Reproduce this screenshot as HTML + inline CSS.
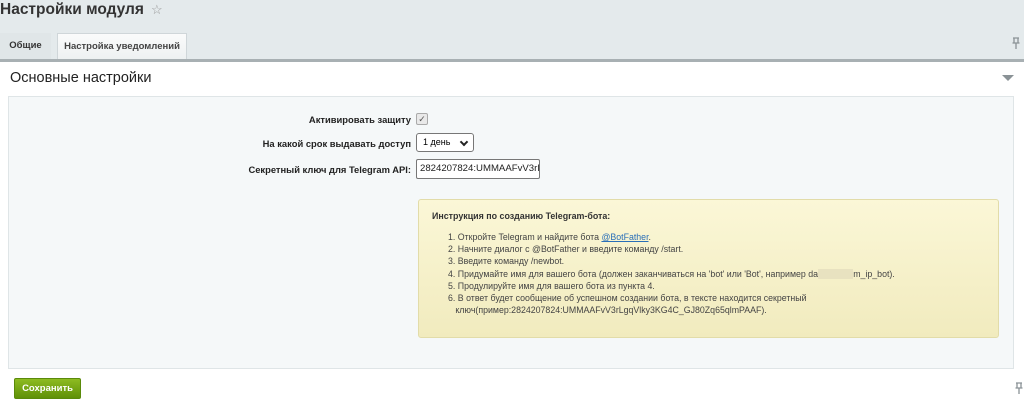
<!DOCTYPE html>
<html><head><meta charset="utf-8"><style>
*{margin:0;padding:0;box-sizing:border-box}
body{width:1024px;height:407px;background:#fff;font-family:"Liberation Sans",Arial,sans-serif;position:relative;overflow:hidden;color:#000}
.top{position:absolute;left:0;top:0;width:1024px;height:59px;background:#e4eaec}
h1{position:absolute;left:0;top:1px;font-size:15.5px;font-weight:bold;color:#333;white-space:nowrap}
.star{position:absolute;left:151px;top:2px;font-size:13px;color:#999}
.tab{position:absolute;top:33px;height:26px;font-size:9.5px;font-weight:bold;line-height:25px;text-align:center;color:#333;white-space:nowrap}
.t1{left:0;width:51px;background:#e0e6e8;}
.t2{left:57px;width:130px;background:linear-gradient(#fafbfb,#eef1f2);border:1px solid #cfd6d9;border-bottom:none;color:#444}
.line{position:absolute;left:0;top:59px;width:1024px;height:3px;background:#a8b0b3}
.sec{position:absolute;left:10px;top:70px;font-size:14.5px;color:#222}
.tri{position:absolute;left:1002px;top:75px;width:0;height:0;border-left:6px solid transparent;border-right:6px solid transparent;border-top:6px solid #8a9296}
.pin{position:absolute}
.box{position:absolute;left:8px;top:96px;width:1006px;height:273px;background:#f5f8f9;border:1px solid #dfe5e7}
.lbl{position:absolute;right:613px;font-size:9.4px;font-weight:bold;color:#222;white-space:nowrap}
.chk{position:absolute;left:416px;top:113px;width:12px;height:12px;border:1px solid #aaa;border-radius:2px;background:#e9e9e9;font-size:9px;line-height:10px;text-align:center;color:#555}
.sel{position:absolute;left:416px;top:133px;width:58px;height:19px;border:1px solid #777;border-radius:3px;background:#fff;font-size:9px;padding-left:6px;line-height:17px}
.sel:after{content:"";position:absolute;right:6px;top:5px;width:4px;height:4px;border-right:2px solid #222;border-bottom:2px solid #222;transform:rotate(45deg)}
.inp{position:absolute;left:416px;top:159px;width:124px;height:20px;border:1px solid #777;border-radius:2px;background:#fff;font-size:9.6px;padding-left:3px;line-height:18px;overflow:hidden;white-space:nowrap;color:#222}
.note{position:absolute;left:418px;top:199px;width:581px;height:139px;background:linear-gradient(#fbf7d7,#f1ebbe);border:1px solid #e2dca9;border-radius:3px;font-size:8.8px;color:#444}
.note b{position:absolute;left:13px;top:11px;font-size:8.9px;color:#333;white-space:nowrap}
.note ol{position:absolute;left:29px;top:31px;line-height:12.2px;padding-left:0;list-style:none;white-space:nowrap}
.note a{color:#2a6fb8;text-decoration:underline}
.btn{position:absolute;left:14px;top:378px;width:67px;height:21px;background:linear-gradient(#8dbb21,#5f9008);border:1px solid #5a8a0a;border-radius:2px;color:#fff;font-size:9.5px;font-weight:bold;text-align:center;line-height:19px}
</style></head><body>
<div class="top"></div>
<h1>Настройки модуля</h1><div class="star">☆</div>
<div class="tab t1">Общие</div>
<div class="tab t2">Настройка уведомлений</div>
<svg class="pin" style="left:1012px;top:37px" width="8" height="12" viewBox="0 0 8 12"><path d="M1 1h6M2 1v5M6 1v5M0.5 6h7M4 6v6" stroke="#8a9296" stroke-width="1.3" fill="none"/></svg>
<div class="line"></div>
<div class="sec">Основные настройки</div>
<div class="tri"></div>
<div class="box"></div>
<div class="lbl" style="top:114px">Активировать защиту</div>
<div class="chk">✓</div>
<div class="lbl" style="top:138px">На какой срок выдавать доступ</div>
<div class="sel">1 день</div>
<div class="lbl" style="top:164px">Секретный ключ для Telegram API:</div>
<div class="inp">2824207824:UMMAAFvV3rLgqV</div>
<div class="note"><b>Инструкция по созданию Telegram-бота:</b>
<ol>
<li>1. Откройте Telegram и найдите бота <a>@BotFather</a>.</li>
<li>2. Начните диалог с @BotFather и введите команду /start.</li>
<li>3. Введите команду /newbot.</li>
<li>4. Придумайте имя для вашего бота (должен заканчиваться на 'bot' или 'Bot', например da<span style="color:#e8e2c0;background:#e8e2c0">xxxxxxxx</span>m_ip_bot).</li>
<li>5. Продулируйте имя для вашего бота из пункта 4.</li>
<li>6. В ответ будет сообщение об успешном создании бота, в тексте находится секретный</li>
<li>&nbsp;&nbsp;&nbsp;ключ(пример:2824207824:UMMAAFvV3rLgqVlky3KG4C_GJ80Zq65qlmPAAF).</li>
</ol></div>
<div class="btn">Сохранить</div>
<svg class="pin" style="left:1015px;top:382px" width="8" height="12" viewBox="0 0 8 12"><path d="M1 1h6M2 1v5M6 1v5M0.5 6h7M4 6v6" stroke="#8a9296" stroke-width="1.3" fill="none"/></svg>
</body></html>
